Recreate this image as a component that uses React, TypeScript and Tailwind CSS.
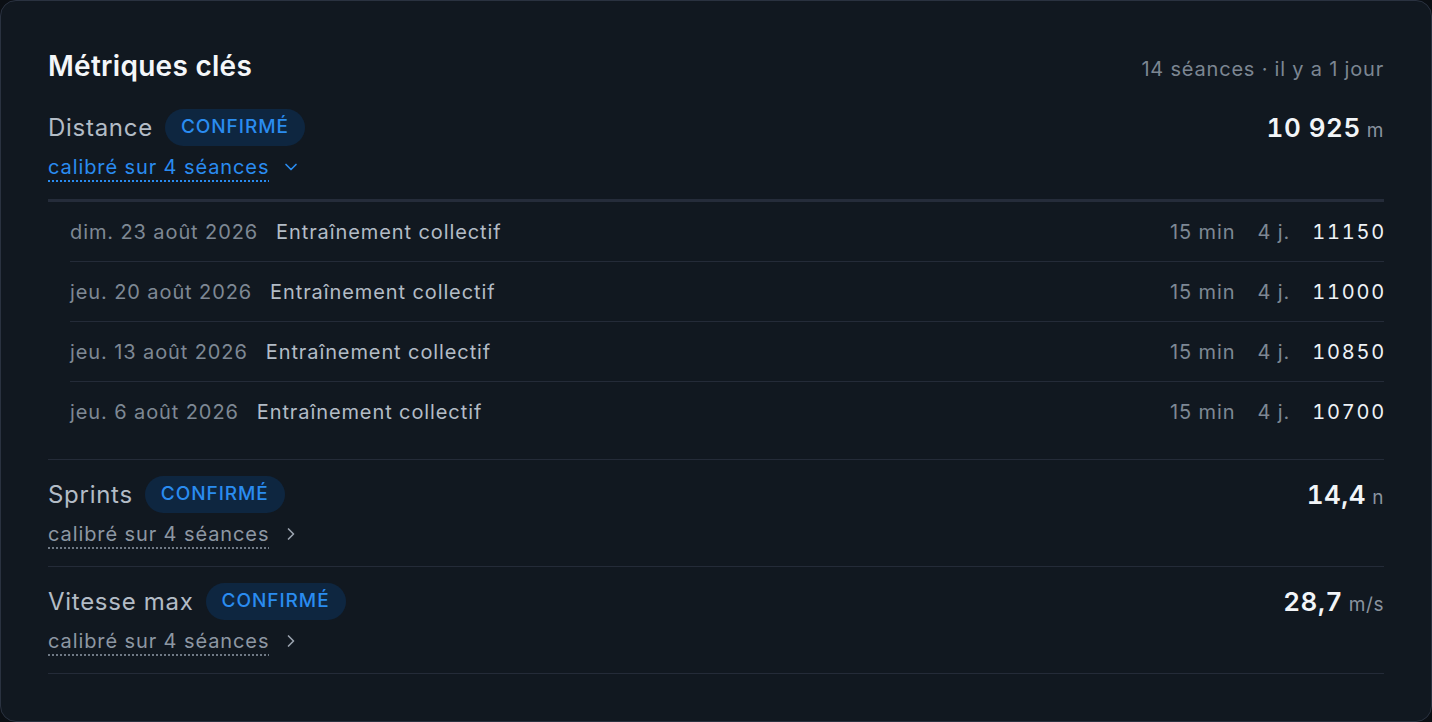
import { ChevronDown, ChevronRight } from "lucide-react";

interface Session {
  date: string;
  label: string;
  duration: string;
  ago: string;
  value: string;
}

interface Metric {
  name: string;
  value: string;
  unit: string;
  open?: boolean;
  sessions?: Session[];
}

const distanceSessions: Session[] = [
  { date: "dim. 23 août 2026", label: "Entraînement collectif", duration: "15 min", ago: "4 j.", value: "11150" },
  { date: "jeu. 20 août 2026", label: "Entraînement collectif", duration: "15 min", ago: "4 j.", value: "11000" },
  { date: "jeu. 13 août 2026", label: "Entraînement collectif", duration: "15 min", ago: "4 j.", value: "10850" },
  { date: "jeu. 6 août 2026", label: "Entraînement collectif", duration: "15 min", ago: "4 j.", value: "10700" },
];

const metrics: Metric[] = [
  { name: "Distance", value: "10 925", unit: "m", open: true, sessions: distanceSessions },
  { name: "Sprints", value: "14,4", unit: "n" },
  { name: "Vitesse max", value: "28,7", unit: "m/s" },
];

function MetricBlock({ metric }: { metric: Metric }) {
  return (
    <div>
      <div
        className={`pt-4 pb-[18px] ${
          metric.open ? "border-b-[3px] border-[#252c3a]" : ""
        }`}
      >
        <div className="flex items-center justify-between h-[37px]">
          <div className="flex items-center gap-3">
            <span className="text-[24px] tracking-[0.03em] text-[#b3bcc6]">{metric.name}</span>
            <span className="h-[37px] px-4 flex items-center rounded-full bg-[#0e2640] text-[#2a8cf0] text-[19px] font-medium tracking-[0.05em]">
              CONFIRMÉ
            </span>
          </div>
          <div className="flex items-baseline gap-1.5">
            <span className="text-[26px] font-semibold text-[#f2f5f8] tabular-nums tracking-[0.02em]">
              {metric.value}
            </span>
            <span className="text-[19px] tracking-[0.03em] text-[#8a939f]">{metric.unit}</span>
          </div>
        </div>
        <div className="mt-[7px] flex items-center gap-3 h-7">
          <span
            className={`text-[20px] leading-7 tracking-[0.045em] underline decoration-dotted decoration-2 underline-offset-[6px] ${
              metric.open
                ? "text-[#2a8cf0] decoration-[#2a8cf0]"
                : "text-[#8d97a3] decoration-[#6f7985]"
            }`}
          >
            calibré sur 4 séances
          </span>
          {metric.open ? (
            <ChevronDown size={20} strokeWidth={2} className="text-[#2a8cf0]" />
          ) : (
            <ChevronRight size={20} strokeWidth={2} className="text-[#9aa3ae]" />
          )}
        </div>
      </div>

      {metric.open && metric.sessions && (
        <div className="pl-[22px] pb-[17px]">
          {metric.sessions.map((s, i) => (
            <div
              key={s.date}
              className={`h-[60px] flex items-center justify-between text-[20px] tracking-[0.045em] ${
                i < metric.sessions!.length - 1 ? "border-b border-[#242b38]" : ""
              }`}
            >
              <div className="flex items-center gap-[18px]">
                <span className="text-[#7e8894]">{s.date}</span>
                <span className="text-[#b3bcc6]">{s.label}</span>
              </div>
              <div className="flex items-center gap-[22px]">
                <span className="text-[#7e8894]">{s.duration}</span>
                <span className="text-[#7e8894]">{s.ago}</span>
                <span className="text-[#eef2f6] tabular-nums tracking-[0.09em] -mr-[2px]">
                  {s.value}
                </span>
              </div>
            </div>
          ))}
        </div>
      )}
      <div className="h-px bg-[#242b38]" />
    </div>
  );
}

export default function App() {
  return (
    <div
      className="w-[1432px] h-[722px] bg-[#0b0f14]"
      style={{ fontFamily: "Inter, 'Noto Sans', sans-serif" }}
    >
      <div className="h-full rounded-2xl border border-[#2a3240] bg-[#111820] px-[47px] pt-12">
        <div className="flex items-baseline justify-between h-[34px]">
          <h2 className="text-[28px] leading-[34px] font-semibold tracking-[0.01em] text-[#f4f6f9]">
            Métriques clés
          </h2>
          <span className="text-[20px] tracking-[0.04em] text-[#7c8692]">
            14 séances · il y a 1 jour
          </span>
        </div>
        <div className="mt-[10px]">
          {metrics.map((m) => (
            <MetricBlock key={m.name} metric={m} />
          ))}
        </div>
      </div>
    </div>
  );
}
